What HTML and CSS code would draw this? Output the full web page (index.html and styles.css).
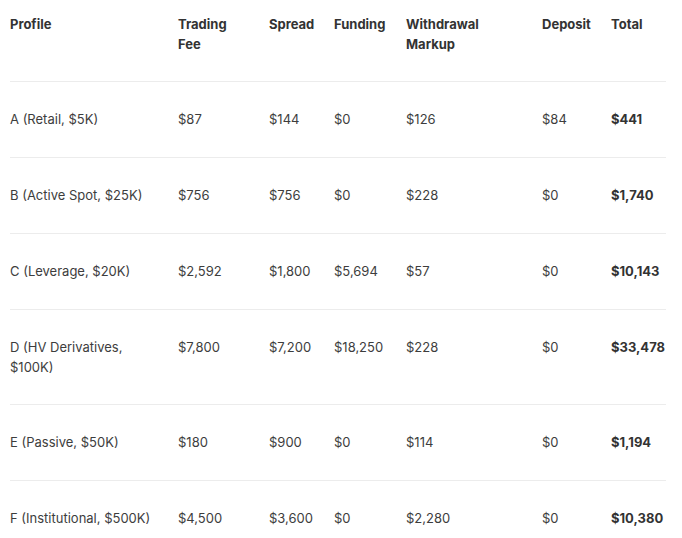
FILE: index.html
```html
<!DOCTYPE html>
<html>
<head>
<meta charset="utf-8">
<link rel="stylesheet" href="styles.css">
</head>
<body>
<table class="costs">
  <colgroup>
    <col class="c-profile">
    <col class="c-trading">
    <col class="c-spread">
    <col class="c-funding">
    <col class="c-withdrawal">
    <col class="c-deposit">
    <col class="c-total">
  </colgroup>
  <thead>
    <tr>
      <th>Profile</th>
      <th>Trading<br>Fee</th>
      <th>Spread</th>
      <th>Funding</th>
      <th>Withdrawal<br>Markup</th>
      <th>Deposit</th>
      <th>Total</th>
    </tr>
  </thead>
  <tbody>
    <tr><td>A (Retail, $5K)</td><td>$87</td><td>$144</td><td>$0</td><td>$126</td><td>$84</td><td class="total">$441</td></tr>
    <tr><td>B (Active Spot, $25K)</td><td>$756</td><td>$756</td><td>$0</td><td>$228</td><td>$0</td><td class="total">$1,740</td></tr>
    <tr><td>C (Leverage, $20K)</td><td>$2,592</td><td>$1,800</td><td>$5,694</td><td>$57</td><td>$0</td><td class="total">$10,143</td></tr>
    <tr class="tall"><td>D (HV Derivatives,<br>$100K)</td><td>$7,800</td><td>$7,200</td><td>$18,250</td><td>$228</td><td>$0</td><td class="total">$33,478</td></tr>
    <tr><td>E (Passive, $50K)</td><td>$180</td><td>$900</td><td>$0</td><td>$114</td><td>$0</td><td class="total">$1,194</td></tr>
    <tr><td>F (Institutional, $500K)</td><td>$4,500</td><td>$3,600</td><td>$0</td><td>$2,280</td><td>$0</td><td class="total">$10,380</td></tr>
  </tbody>
</table>
</body>
</html>
```
FILE: styles.css
```css
html, body {
  margin: 0;
  padding: 0;
  background: #ffffff;
}
body {
  padding: 0 16px 0 10px;
  font-family: Inter, "Noto Sans", sans-serif;
  font-size: 13px;
  line-height: 20px;
  color: #3d3d3d;
}
.costs {
  border-collapse: collapse;
  table-layout: fixed;
  width: 656px;
}
.c-profile { width: 168px; }
.c-trading { width: 91px; }
.c-spread { width: 65px; }
.c-funding { width: 72px; }
.c-withdrawal { width: 136px; }
.c-deposit { width: 69px; }
.c-total { width: 55px; }
.costs th {
  text-align: left;
  vertical-align: top;
  font-weight: 700;
  color: #333333;
  padding: 14px 0 27px 0;
  border-bottom: 1px solid #ececec;
}
.costs td {
  padding: 27px 0 28px 0;
  vertical-align: top;
  border-bottom: 1px solid #ececec;
  white-space: nowrap;
}
.costs tr.tall td {
  padding-bottom: 27px;
}
.costs td.total {
  font-weight: 700;
  color: #333333;
}
```
